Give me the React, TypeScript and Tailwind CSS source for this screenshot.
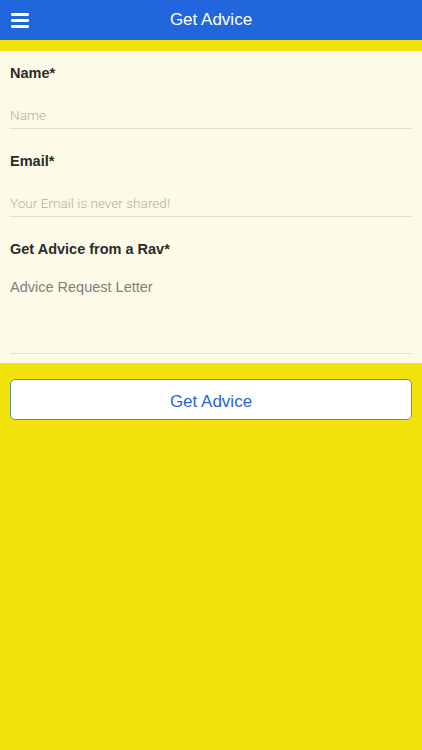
const fields = [
  { key: "name", label: "Name*", placeholder: "Name" },
  { key: "email", label: "Email*", placeholder: "Your Email is never shared!" },
] as const;

export default function App() {
  return (
    <div
      className="min-h-[750px] w-full bg-[#f1e20c] flex flex-col"
      style={{ fontFamily: '"Liberation Sans", Arial, sans-serif' }}
    >
      {/* Top bar */}
      <header className="h-10 bg-[#2266dd] flex items-center relative">
        <button className="absolute left-[10px] top-[9px] w-5 h-[22px] flex flex-col justify-center gap-[3px] px-[1px]">
          <span className="block h-[3px] bg-white rounded-[1px]" />
          <span className="block h-[3px] bg-white rounded-[1px]" />
          <span className="block h-[3px] bg-white rounded-[1px]" />
        </button>
        <h1 className="flex-1 text-center text-white text-[17px] leading-5">
          Get Advice
        </h1>
      </header>

      <div className="h-[11px]" />

      {/* Form */}
      <form className="bg-[#fdfbe7] px-[10px] pt-[13px] pb-[9px]">
        {fields.map((f, i) => (
          <div key={f.key} className={i > 0 ? "mt-[23px]" : ""}>
            <label className="block text-[14.5px] leading-[18px] font-bold text-[#2b2b2b]">
              {f.label}
            </label>
            <input
              placeholder={f.placeholder}
              className="mt-6 block w-full bg-transparent pb-1 text-[13.6px] leading-[18px] font-light text-[#333] placeholder:text-[#b3b1a6] border-b border-[#e2e0d4] outline-none"
              style={{ fontFamily: "Roboto, Arial, sans-serif" }}
            />
          </div>
        ))}
        <div className="mt-[23px]">
          <label className="block text-[14.5px] leading-[18px] font-bold text-[#2b2b2b]">
            Get Advice from a Rav*
          </label>
          <textarea
            placeholder="Advice Request Letter"
            className="mt-5 block w-full h-[76px] resize-none bg-transparent text-[14.5px] leading-[18px] text-[#333] placeholder:text-[#808080] border-b border-[#e2e0d4] outline-none"
          />
        </div>
      </form>

      <div className="px-[10px] pt-4">
        <button className="w-full h-[41px] bg-white border border-[#6d8a9c] rounded-[5px] text-[#2a64d2] text-[17px] leading-[41px] pt-[1px]">
          Get Advice
        </button>
      </div>
    </div>
  );
}
